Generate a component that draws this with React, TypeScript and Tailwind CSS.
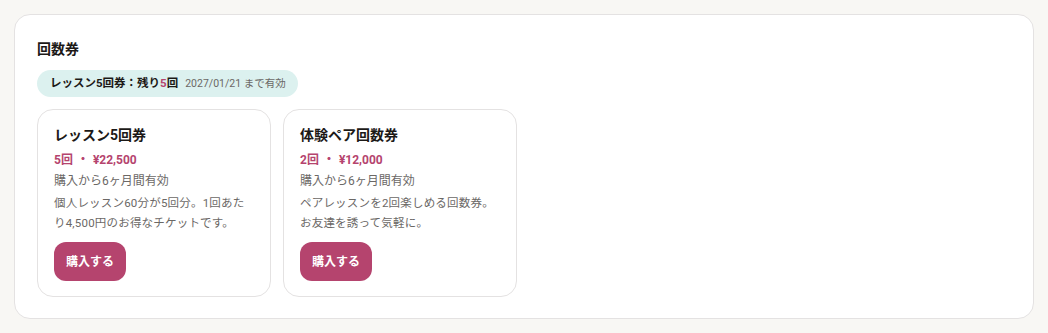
const tickets = [
  {
    name: "レッスン5回券",
    count: "5回",
    price: "¥22,500",
    valid: "購入から6ヶ月間有効",
    desc: "個人レッスン60分が5回分。1回あたり4,500円のお得なチケットです。",
  },
  {
    name: "体験ペア回数券",
    count: "2回",
    price: "¥12,000",
    valid: "購入から6ヶ月間有効",
    desc: "ペアレッスンを2回楽しめる回数券。お友達を誘って気軽に。",
  },
];

export default function App() {
  return (
    <div
      className="min-h-[333px] bg-[#f8f7f4] p-[14px]"
      style={{ fontFamily: "Roboto, 'Noto Sans CJK JP', sans-serif" }}
    >
      <section className="rounded-[16px] border border-[#e4e2e2] bg-white px-[22px] pt-[24px] pb-[21px]">
        <h2 className="text-[14px] font-bold leading-[20px] text-[#1c1917]">回数券</h2>
        <div className="mt-[11px] inline-flex h-[27px] items-center gap-[7px] rounded-full bg-[#dcf1ef] pl-[13px] pr-[12px]">
          <span className="text-[11.5px] font-bold text-[#1c1917]">
            レッスン5回券：残り<span className="text-[#b5446e]">5</span>回
          </span>
          <span className="text-[10.5px] text-[#6b6866]">2027/01/21 まで有効</span>
        </div>
        <div className="mt-[12px] flex gap-[12px]">
          {tickets.map((t) => (
            <div
              key={t.name}
              className="w-[234px] rounded-[16px] border border-[#e4e2e2] px-[16px] pt-[15px] pb-[15px]"
            >
              <h3 className="text-[14px] font-bold leading-[20px] text-[#1c1917]">{t.name}</h3>
              <p className="mt-[6px] text-[12px] font-bold leading-[18px] text-[#b5446e]">
                {t.count}
                <span className="mx-[4px]">・</span>
                {t.price}
              </p>
              <p className="mt-[3px] text-[12px] leading-[18px] text-[#6b6866]">{t.valid}</p>
              <p className="mt-[4px] text-[11.5px] leading-[19.5px] tracking-[0.2px] text-[#6b6866]">{t.desc}</p>
              <button className="mt-[9px] h-[39px] w-[72px] rounded-[12px] bg-[#b5446e] text-[12px] font-bold text-white">
                購入する
              </button>
            </div>
          ))}
        </div>
      </section>
    </div>
  );
}
